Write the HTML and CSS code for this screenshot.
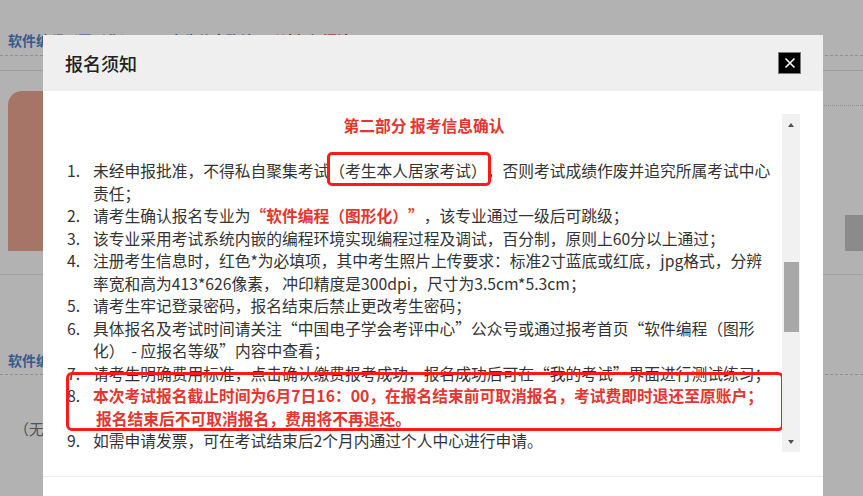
FILE: index.html
```html
<!DOCTYPE html>
<html lang="zh-CN">
<head>
<meta charset="utf-8">
<title>报名须知</title>
<link rel="stylesheet" href="styles.css">
</head>
<body>
<div class="bg">
  <div class="bg-head">
    <span class="bg-blue">软件编程（图形化）</span>
    <span class="bg-blue bg-gap">考生信息确认</span>
    <span class="bg-red">*请仔细阅读</span>
  </div>
  <div class="bg-rule"></div>
  <div class="bg-main">
    <div class="bg-card"></div>
    <div class="bg-side">
      <div class="bg-dotted"></div>
      <div class="bg-btn"></div>
    </div>
  </div>
  <div class="bg-line"></div>
  <div class="bg-sub">软件编程（图形化）</div>
  <div class="bg-none">（无）</div>
</div>

<div class="overlay"></div>

<div class="modal">
  <div class="modal-header">
    <h2 class="modal-title">报名须知</h2>
    <button class="close" type="button" aria-label="关闭">
      <svg width="12" height="12" viewBox="0 0 12 12"><path d="M1.5 1.5 L10.5 10.5 M10.5 1.5 L1.5 10.5" stroke="#fff" stroke-width="1.6" fill="none"/></svg>
    </button>
  </div>
  <div class="modal-body">
    <div class="scroll">
      <div class="scroll-content">
        <p class="section-title">第二部分 报考信息确认</p>
        <ol class="notice">
          <li><span class="num">1.</span><span class="txt">未经申报批准，不得私自聚集考试<span class="circled">（考生本人居家考试）</span>，否则考试成绩作废并追究所属考试中心责任；</span></li>
          <li><span class="num">2.</span><span class="txt">请考生确认报名专业为<b class="red">“软件编程（图形化）”</b>，该专业通过一级后可跳级；</span></li>
          <li><span class="num">3.</span><span class="txt">该专业采用考试系统内嵌的编程环境实现编程过程及调试，百分制，原则上60分以上通过；</span></li>
          <li><span class="num">4.</span><span class="txt">注册考生信息时，红色*为必填项，其中考生照片上传要求：标准2寸蓝底或红底，jpg格式，分辨率宽和高为413*626像素， 冲印精度是300dpi，尺寸为3.5cm*5.3cm；</span></li>
          <li><span class="num">5.</span><span class="txt">请考生牢记登录密码，报名结束后禁止更改考生密码；</span></li>
          <li><span class="num">6.</span><span class="txt">具体报名及考试时间请关注“中国电子学会考评中心”公众号或通过报考首页“软件编程（图形化）&nbsp; - 应报名等级”内容中查看；</span></li>
          <li><span class="num">7.</span><span class="txt">请考生明确费用标准，点击确认缴费报考成功，报名成功后可在“我的考试”界面进行测试练习；</span></li>
          <li class="boxed"><span class="num">8.</span><span class="txt red">本次考试报名截止时间为6月7日16：00，在报名结束前可取消报名，考试费即时退还至原账户；<span class="cont">报名结束后不可取消报名，费用将不再退还。</span></span></li>
          <li><span class="num">9.</span><span class="txt">如需申请发票，可在考试结束后2个月内通过个人中心进行申请。</span></li>
        </ol>
      </div>
      <div class="scrollbar">
        <span class="arrow arrow-up"></span>
        <span class="thumb"></span>
        <span class="arrow arrow-down"></span>
      </div>
    </div>
  </div>
  <div class="modal-footer"></div>
</div>
</body>
</html>
```

FILE: styles.css
```css
* {
  box-sizing: border-box;
  margin: 0;
  padding: 0;
}

html, body {
  width: 863px;
  height: 496px;
  overflow: hidden;
}

body {
  position: relative;
  background: #fff;
  font-family: "Noto Sans CJK SC", "Noto Sans", sans-serif;
  color: #333;
  text-spacing-trim: space-all;
}

/* ---------- background page ---------- */
.bg {
  width: 863px;
}

.bg-head {
  height: 56px;
  padding: 31px 0 0 8px;
  border-bottom: 1px dashed #cfcfcf;
  font-size: 14px;
  line-height: 18px;
  font-weight: bold;
  white-space: nowrap;
  display: flex;
}

.bg-blue {
  color: #4f83d1;
}

.bg-gap {
  margin-left: 36px;
}

.bg-red {
  color: #f02a2a;
  margin-left: 20px;
}

.bg-rule {
  margin-top: 14px;
  height: 1px;
  background: #e3e3e3;
}

.bg-main {
  display: flex;
  justify-content: space-between;
  padding: 20px 0 0 8px;
  height: 180px;
}

.bg-card {
  width: 300px;
  height: 160px;
  background: #f0a896;
  border-radius: 14px 0 0 0;
}

.bg-side {
  width: 160px;
  padding-top: 14px;
}

.bg-dotted {
  border-top: 1px dotted #cfcfcf;
}

.bg-btn {
  margin: 109px 0 0 auto;
  width: 18px;
  height: 36px;
  background: #c8c8c8;
}

.bg-line {
  margin-top: 23px;
  height: 1px;
  background: #e6e6e6;
}

.bg-sub {
  margin-top: 76px;
  padding: 0 0 6px 8px;
  height: 24px;
  border-bottom: 1px dashed #cfcfcf;
  font-size: 14px;
  line-height: 18px;
  font-weight: bold;
  color: #4f83d1;
  white-space: nowrap;
}

.bg-none {
  margin-top: 44px;
  padding-left: 14px;
  font-size: 15px;
  line-height: 20px;
  color: #777;
}

.overlay {
  position: absolute;
  inset: 0;
  background: rgba(0, 0, 0, 0.3);
}

/* ---------- modal ---------- */
.modal {
  position: absolute;
  left: 43px;
  top: 35px;
  width: 780px;
  height: 520px;
  background: #fff;
  display: flex;
  flex-direction: column;
}

.modal-header {
  height: 56px;
  flex: none;
  background: #efefef;
  padding: 0 22px;
  display: flex;
  align-items: center;
  justify-content: space-between;
}

.modal-title {
  font-size: 18px;
  font-weight: 500;
  color: #222;
  line-height: 24px;
}

.close {
  width: 23px;
  height: 22px;
  background: #000;
  border: 1px solid #7a7a7a;
  display: flex;
  align-items: center;
  justify-content: center;
  cursor: pointer;
}

.modal-body {
  padding: 23px 23px 24px 23px;
  flex: none;
}

.scroll {
  height: 338px;
  display: flex;
}

.scroll-content {
  flex: 1;
  overflow: hidden;
  font-size: 15.75px;
  line-height: 22.5px;
  padding-top: 1px;
}

.section-title {
  text-align: center;
  color: #e8342e;
  font-weight: bold;
  margin-bottom: 22.5px;
}

.notice {
  list-style: none;
}

.notice li {
  display: flex;
  position: relative;
}

.num {
  flex: none;
  width: 27px;
  padding-left: 1px;
}

.txt {
  flex: 1;
  padding-right: 6px;
}

.red {
  color: #e8342e;
  font-weight: bold;
}

.cont {
  display: block;
  padding-left: 3px;
}

.circled {
  position: relative;
}

.circled::after {
  content: "";
  position: absolute;
  left: -2px;
  right: -4px;
  top: -7px;
  bottom: -4px;
  border: 3px solid #ff1a1a;
  border-radius: 5px;
}

.boxed::after {
  content: "";
  position: absolute;
  left: 0;
  right: -2px;
  top: -13px;
  bottom: -1px;
  border: 3px solid #ff1a1a;
  border-radius: 6px;
}

/* fake scrollbar */
.scrollbar {
  width: 18px;
  flex: none;
  background: #f1f1f1;
  display: flex;
  flex-direction: column;
  align-items: center;
}

.arrow {
  width: 0;
  height: 0;
  border-left: 3.5px solid transparent;
  border-right: 3.5px solid transparent;
}

.arrow-up {
  margin-top: 9px;
  border-bottom: 4px solid #505050;
}

.arrow-down {
  margin-top: auto;
  margin-bottom: 8px;
  border-top: 4px solid #505050;
}

.thumb {
  margin-top: 135px;
  width: 15px;
  height: 70px;
  background: #a8a8a8;
}

.modal-footer {
  border-top: 1px solid #ececec;
  flex: 1;
}
```
